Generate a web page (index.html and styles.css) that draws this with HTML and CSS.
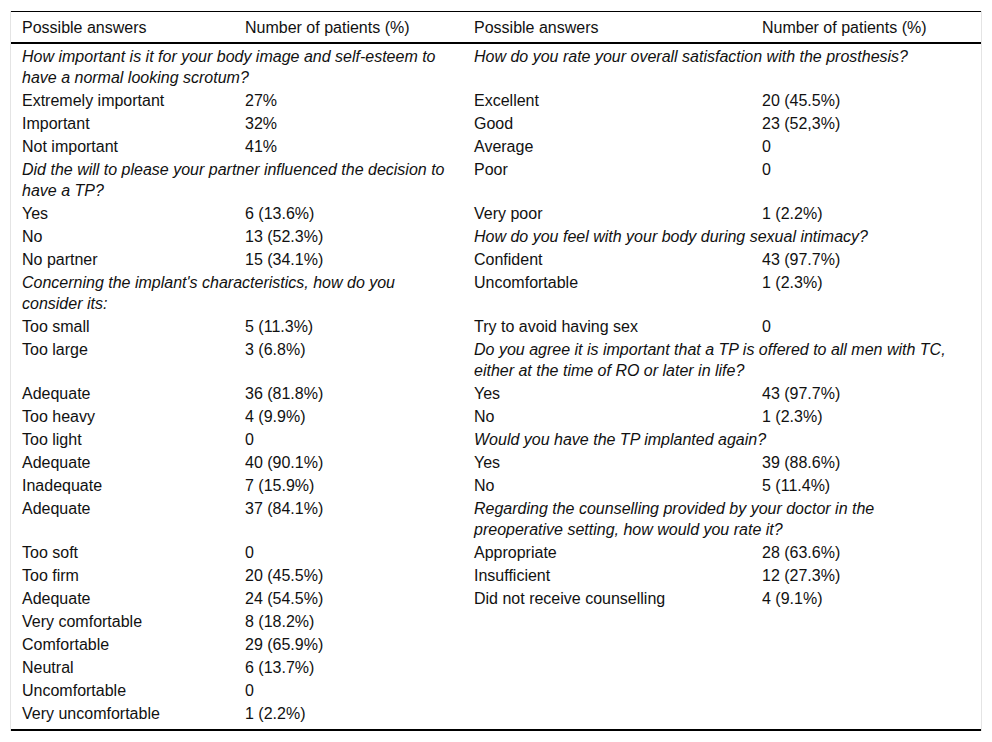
FILE: index.html
```
<!DOCTYPE html>
<html lang="en">
<head>
<meta charset="utf-8">
<title>Survey results</title>
<link rel="stylesheet" href="styles.css">
</head>
<body>
<div class="frame">
<table class="results">
<colgroup>
<col class="c1"><col class="c2"><col class="c3"><col class="c4">
</colgroup>
<thead>
<tr><th>Possible answers</th><th>Number of patients (%)</th><th>Possible answers</th><th>Number of patients (%)</th></tr>
</thead>
<tbody>
<tr><td colspan="2" class="q">How important is it for your body image and self-esteem to have a normal looking scrotum?</td><td colspan="2" class="q">How do you rate your overall satisfaction with the prosthesis?</td></tr>
<tr><td>Extremely important</td><td>27%</td><td>Excellent</td><td>20 (45.5%)</td></tr>
<tr><td>Important</td><td>32%</td><td>Good</td><td>23 (52,3%)</td></tr>
<tr><td>Not important</td><td>41%</td><td>Average</td><td>0</td></tr>
<tr><td colspan="2" class="q">Did the will to please your partner influenced the decision to have a TP?</td><td>Poor</td><td>0</td></tr>
<tr><td>Yes</td><td>6 (13.6%)</td><td>Very poor</td><td>1 (2.2%)</td></tr>
<tr><td>No</td><td>13 (52.3%)</td><td colspan="2" class="q">How do you feel with your body during sexual intimacy?</td></tr>
<tr><td>No partner</td><td>15 (34.1%)</td><td>Confident</td><td>43 (97.7%)</td></tr>
<tr><td colspan="2" class="q">Concerning the implant's characteristics, how do you consider its:</td><td>Uncomfortable</td><td>1 (2.3%)</td></tr>
<tr><td>Too small</td><td>5 (11.3%)</td><td>Try to avoid having sex</td><td>0</td></tr>
<tr><td>Too large</td><td>3 (6.8%)</td><td colspan="2" class="q">Do you agree it is important that a TP is offered to all men with TC, either at the time of RO or later in life?</td></tr>
<tr><td>Adequate</td><td>36 (81.8%)</td><td>Yes</td><td>43 (97.7%)</td></tr>
<tr><td>Too heavy</td><td>4 (9.9%)</td><td>No</td><td>1 (2.3%)</td></tr>
<tr><td>Too light</td><td>0</td><td colspan="2" class="q">Would you have the TP implanted again?</td></tr>
<tr><td>Adequate</td><td>40 (90.1%)</td><td>Yes</td><td>39 (88.6%)</td></tr>
<tr><td>Inadequate</td><td>7 (15.9%)</td><td>No</td><td>5 (11.4%)</td></tr>
<tr><td>Adequate</td><td>37 (84.1%)</td><td colspan="2" class="q">Regarding the counselling provided by your doctor in the preoperative setting, how would you rate it?</td></tr>
<tr><td>Too soft</td><td>0</td><td>Appropriate</td><td>28 (63.6%)</td></tr>
<tr><td>Too firm</td><td>20 (45.5%)</td><td>Insufficient</td><td>12 (27.3%)</td></tr>
<tr><td>Adequate</td><td>24 (54.5%)</td><td>Did not receive counselling</td><td>4 (9.1%)</td></tr>
<tr><td>Very comfortable</td><td>8 (18.2%)</td><td></td><td></td></tr>
<tr><td>Comfortable</td><td>29 (65.9%)</td><td></td><td></td></tr>
<tr><td>Neutral</td><td>6 (13.7%)</td><td></td><td></td></tr>
<tr><td>Uncomfortable</td><td>0</td><td></td><td></td></tr>
<tr class="last"><td>Very uncomfortable</td><td>1 (2.2%)</td><td></td><td></td></tr>
</tbody>
</table>
</div>
</body>
</html>
```
FILE: styles.css
```
html, body {
  margin: 0;
  padding: 0;
  background: #fff;
}
body {
  font-family: "Liberation Sans", Arial, sans-serif;
  font-size: 16px;
  color: #111;
}
.frame {
  margin: 11px 0 0 10px;
  width: 970px;
  border-left: 1px solid #e4e4e4;
  border-right: 1px solid #e4e4e4;
}
.results {
  width: 970px;
  table-layout: fixed;
  border-collapse: separate;
  border-spacing: 0;
}
.c1 { width: 223px; }
.c2 { width: 229px; }
.c3 { width: 288px; }
.c4 { width: 230px; }
.results th {
  font-weight: normal;
  text-align: left;
  line-height: 22px;
  padding: 5px 11px 3px;
  border-top: 1px solid #000;
  border-bottom: 2px solid #000;
  white-space: nowrap;
}
.results td {
  line-height: 21px;
  padding: 2px 11px 0;
  vertical-align: top;
  text-align: left;
}
.results td:last-child {
  padding-right: 16px;
}
.results td.q {
  font-style: italic;
}
.results tr.last td {
  padding-bottom: 5px;
  border-bottom: 2px solid #000;
}
```
